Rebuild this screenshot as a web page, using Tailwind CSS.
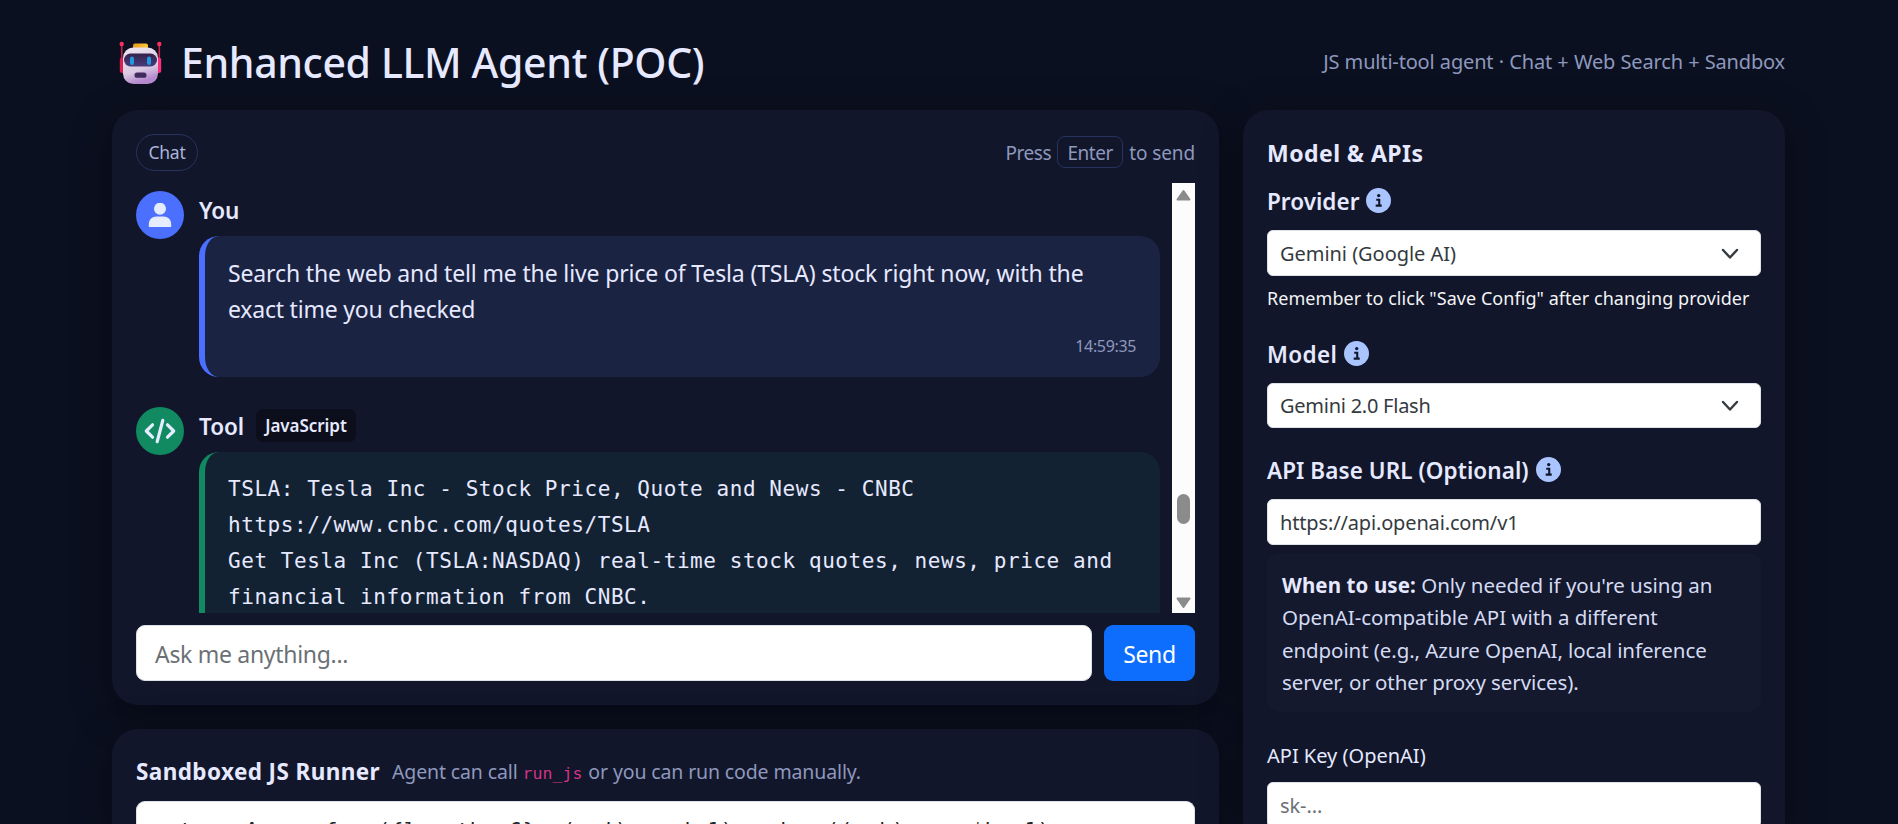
<!DOCTYPE html>
<html lang="en">
<head>
<meta charset="utf-8">
<title>Enhanced LLM Agent (POC)</title>
<script src="https://cdn.jsdelivr.net/npm/@tailwindcss/browser@4"></script>
</head>
<body class="h-[824px] overflow-hidden bg-[#0b1020] font-['Noto_Sans',sans-serif] text-[#e6e9ff]">
<div class="mx-[112px] h-[824px] w-[1673px]">
  <header class="flex h-[110px] items-center justify-between pt-[14px]">
    <h1 class="flex items-center whitespace-nowrap text-[41px] font-medium leading-[56px] tracking-[-0.36px]">
      <svg class="ml-[7px] mr-[19px] mt-[2px] h-[44px] w-[43px]" viewBox="0 0 43 44">
        <defs>
          <linearGradient id="head" x1="0" y1="0" x2="0.3" y2="1"><stop offset="0" stop-color="#efe6f1"/><stop offset="0.7" stop-color="#d9c9e2"/><stop offset="1" stop-color="#b58ad0"/></linearGradient>
          <linearGradient id="visor" x1="0" y1="0" x2="0" y2="1"><stop offset="0" stop-color="#35204a"/><stop offset="1" stop-color="#483e7c"/></linearGradient>
          <linearGradient id="cap" x1="0" y1="0" x2="1" y2="0"><stop offset="0" stop-color="#e89a1e"/><stop offset="1" stop-color="#fcca35"/></linearGradient>
        </defs>
        <path d="M2.7 3v16M40.3 3v16" stroke="#c9234f" stroke-width="1.6"/>
        <circle cx="2.7" cy="3" r="2.2" fill="#f8315f"/><circle cx="40.3" cy="3" r="2.2" fill="#f8315f"/>
        <rect x="0.8" y="16.500" width="6" height="15.500" rx="2.500" fill="#d81e50"/><rect x="36.200" y="16.500" width="6" height="15.500" rx="2.500" fill="#f8317a"/>
        <rect x="14" y="2.500" width="15" height="7" rx="2" fill="url(#cap)"/>
        <rect x="4" y="6.500" width="35" height="36.500" rx="10.500" fill="url(#head)"/>
        <rect x="5" y="12.500" width="33" height="13" rx="6.500" fill="url(#visor)"/>
        <rect x="11" y="15.500" width="4" height="8.500" rx="2" fill="#1e9be0"/><rect x="28" y="15.500" width="4" height="8.500" rx="2" fill="#1e9be0"/>
        <rect x="15.500" y="31.500" width="12" height="5.300" rx="2.600" fill="#402a5e"/>
      </svg>
      <span>Enhanced LLM Agent (POC)</span>
    </h1>
    <div class="whitespace-nowrap text-[20px] leading-[30px] tracking-[-0.17px] [word-spacing:0.3px] text-[#8e98bd]">JS multi-tool agent · Chat + Web Search + Sandbox</div>
  </header>

  <div class="flex h-[714px] gap-6">
    <main class="flex w-[1107px] flex-col gap-6">
      <section class="h-[595px] shrink-0 rounded-[26px] bg-[#11162a] p-6 shadow-[0_10px_40px_rgba(0,0,0,0.4)]">
        <div class="flex h-[37px] items-center justify-between">
          <span class="flex h-[37px] w-[62px] items-center justify-center rounded-full border border-[#26335f] text-[17.5px] tracking-[-0.25px] text-[#a9b4d9]">Chat</span>
          <span class="flex items-center text-[19px] tracking-[-0.45px] text-[#8e98bd]"><span class="pt-0.5">Press</span><kbd class="mx-[6px] mb-px flex h-[32px] w-[66px] items-center justify-center rounded-[8px] border border-[#26335f] pt-0.5 font-['Noto_Sans',sans-serif]">Enter</kbd><span class="pt-0.5 tracking-[-0.1px]">to send</span></span>
        </div>

        <div class="mt-3 flex h-[430px] gap-3 overflow-hidden">
          <div class="flex w-[1024px] flex-col gap-[30px] pt-2">
            <div class="flex gap-[15px]">
              <div class="flex h-12 w-12 shrink-0 items-center justify-center rounded-full bg-[#4b6fff]">
                <svg class="h-6 w-6" viewBox="0 0 24 24" fill="#e6ecff"><circle cx="12" cy="5.700" r="6"/><path d="M.8 24v-2.500c0-5 3.500-7.900 7.700-7.900h7c4.200 0 7.700 2.900 7.700 7.900V24z"/></svg>
              </div>
              <div class="w-[961px]">
                <div class="text-[22.5px] font-semibold leading-[39px] tracking-[-0.2px]">You</div>
                <div class="mt-[6px] h-[141px] rounded-[20px] border-l-[6px] border-[#4b6fff] bg-[#1b2342] pl-[23px] pr-6 pt-[19px]">
                  <p class="whitespace-nowrap text-[23px] leading-[36px] tracking-[-0.14px]">Search the web and tell me the live price of Tesla (TSLA) stock right now, with the<br><span class="tracking-[-0.22px]">exact time you checked</span></p>
                  <div class="mt-[7px] text-right text-[16px] leading-[25px] tracking-[-0.35px] text-[#8e98bd]">14:59:35</div>
                </div>
              </div>
            </div>
            <div class="flex gap-[15px]">
              <div class="flex h-12 w-12 shrink-0 items-center justify-center rounded-full bg-[#118a62]">
                <svg class="h-[26px] w-[32px]" viewBox="0 0 32 26" fill="none" stroke="#e6ecff" stroke-width="3.200" stroke-linecap="round" stroke-linejoin="round"><path d="M8.500 6.800 2.300 13l6.200 6.200M23.500 6.800l6.200 6.200-6.200 6.200M18.800 2.300 13.200 23.700"/></svg>
              </div>
              <div class="w-[961px]">
                <div class="flex h-[39px] items-center text-[22.5px] font-semibold leading-[39px]"><span class="tracking-[-0.1px]">Tool</span><span class="ml-[12px] mb-[3px] flex h-[33px] w-[100px] items-center justify-center rounded-[7px] bg-[#0c0e1b] pt-px text-[17px] tracking-[-0.05px]">JavaScript</span></div>
                <div class="mt-[6px] h-[220px] rounded-[20px] border-l-[6px] border-[#118a62] bg-[#132233] pl-[23px] pt-[19px]">
                  <pre class="font-['DejaVu_Sans_Mono',monospace] text-[21px] leading-[36px] tracking-[0.56px]">TSLA: Tesla Inc - Stock Price, Quote and News - CNBC
https://www.cnbc.com/quotes/TSLA
Get Tesla Inc (TSLA:NASDAQ) real-time stock quotes, news, price and
financial information from CNBC.</pre>
                </div>
              </div>
            </div>
          </div>
          <div class="flex h-[430px] w-[23px] flex-col items-center bg-[#fcfcfc]">
            <svg class="mt-[6px] h-[12px] w-[15px] shrink-0" viewBox="0 0 15 12" fill="#8b8b8b" stroke="#8b8b8b" stroke-width="2" stroke-linejoin="round"><path d="M7.500 2 13.500 10.500h-12z"/></svg>
            <div class="mt-[293px] h-[30px] w-[13px] shrink-0 rounded-full bg-[#8b8b8b]"></div>
            <svg class="mt-[72px] h-[12px] w-[15px] shrink-0" viewBox="0 0 15 12" fill="#8b8b8b" stroke="#8b8b8b" stroke-width="2" stroke-linejoin="round"><path d="M7.500 11 13.500 2.500h-12z"/></svg>
          </div>
        </div>

        <div class="mt-3 flex gap-3">
          <div class="flex h-14 w-[956px] items-center rounded-[9px] border border-[#dee2e6] bg-white pl-[18px] pt-0.5 text-[23px] tracking-[-0.3px] text-[#6b7075]">Ask me anything...</div>
          <button class="flex h-14 w-[91px] items-center justify-center rounded-[9px] bg-[#0d6efd] pt-0.5 text-[23px] tracking-[-0.4px] text-white">Send</button>
        </div>
      </section>

      <section class="flex min-h-0 flex-1 flex-col rounded-t-[26px] bg-[#11162a] px-6 pt-6 shadow-[0_10px_40px_rgba(0,0,0,0.4)]">
        <div class="flex h-[36px] shrink-0 items-center whitespace-nowrap pt-0.5">
          <span class="w-[256px] text-[22.5px] font-bold tracking-[0.4px]">Sandboxed JS Runner</span>
          <span class="text-[19.5px] tracking-[-0.13px] text-[#8e98bd]">Agent can call <code class="mr-px font-['DejaVu_Sans_Mono',monospace] text-[16.5px] tracking-[0.05px] text-[#d63384]">run_js</code> or you can run code manually.</span>
        </div>
        <div class="mt-3 min-h-0 flex-1 overflow-hidden rounded-t-[9px] border border-b-0 border-[#dee2e6] bg-white pl-4 pt-[11px]">
          <pre class="font-['DejaVu_Sans_Mono',monospace] text-[21px] leading-[36px] tracking-[0.56px] text-[#212529]">return Array.from({length: 6}, (_,i) =&gt; i+1).reduce((a,b) =&gt; a*b, 1)</pre>
        </div>
      </section>
    </main>

    <aside class="h-[714px] w-[542px] overflow-hidden rounded-t-[26px] bg-[#11162a] px-6 pt-6 shadow-[0_10px_40px_rgba(0,0,0,0.4)]">
      <h2 class="text-[23px] font-bold leading-[38px] tracking-[0.45px]">Model &amp; APIs</h2>

      <div class="mt-[12px] flex h-[36px] items-center text-[22.5px] font-semibold tracking-[0.02px]">Provider
        <svg class="mb-[3px] ml-[7px] h-[25px] w-[25px]" viewBox="0 0 24 24"><circle cx="12" cy="12" r="12" fill="#a9c4ff"/><circle cx="12.200" cy="7.300" r="1.600" fill="#11162a"/><path d="M9.800 11.300h2.900v5.200M9.300 16.900h5.800" fill="none" stroke="#11162a" stroke-width="2"/></svg>
      </div>
      <div class="mt-[10px] flex h-[46px] items-center justify-between rounded-[6px] border border-[#dee2e6] bg-white pl-[12px] pr-[20px] pt-px text-[20px] tracking-[-0.04px] text-[#343a40]">Gemini (Google AI)
        <svg class="h-[18px] w-[20px]" viewBox="0 0 20 18" fill="none" stroke="#343a40" stroke-width="2.400" stroke-linecap="round" stroke-linejoin="round"><path d="m3 5 7 7.500L17 5"/></svg>
      </div>
      <p class="mt-[6px] whitespace-nowrap text-[18px] leading-[32px] tracking-[0.05px] text-[#f3f4f6]">Remember to click "Save Config" after changing provider</p>

      <div class="mt-[23px] flex h-[36px] items-center text-[22.5px] font-semibold tracking-[0.35px]">Model
        <svg class="mb-[3px] ml-[7px] h-[25px] w-[25px]" viewBox="0 0 24 24"><circle cx="12" cy="12" r="12" fill="#a9c4ff"/><circle cx="12.200" cy="7.300" r="1.600" fill="#11162a"/><path d="M9.800 11.300h2.900v5.200M9.300 16.900h5.800" fill="none" stroke="#11162a" stroke-width="2"/></svg>
      </div>
      <div class="mt-[10px] flex h-[45px] items-center justify-between rounded-[6px] border border-[#dee2e6] bg-white pl-[12px] pr-[20px] pt-px text-[20px] tracking-[-0.25px] text-[#343a40]">Gemini 2.0 Flash
        <svg class="h-[18px] w-[20px]" viewBox="0 0 20 18" fill="none" stroke="#343a40" stroke-width="2.400" stroke-linecap="round" stroke-linejoin="round"><path d="m3 5 7 7.500L17 5"/></svg>
      </div>

      <div class="mt-[25px] flex h-[36px] items-center text-[22.5px] font-semibold tracking-[0.06px]">API Base URL (Optional)
        <svg class="mb-[3px] ml-[7px] h-[25px] w-[25px]" viewBox="0 0 24 24"><circle cx="12" cy="12" r="12" fill="#a9c4ff"/><circle cx="12.200" cy="7.300" r="1.600" fill="#11162a"/><path d="M9.800 11.300h2.900v5.200M9.300 16.900h5.800" fill="none" stroke="#11162a" stroke-width="2"/></svg>
      </div>
      <div class="mt-[10px] flex h-[46px] items-center rounded-[6px] border border-[#dee2e6] bg-white pl-[12px] pt-px text-[20px] tracking-[-0.15px] text-[#343a40]">https://api.openai.com/v1</div>
      <div class="mt-2 h-[159px] whitespace-nowrap rounded-[12px] bg-[#14192d] pl-[15px] pt-[16px] text-[20.5px] leading-[32.3px] tracking-[-0.04px] text-[#d5dbf3]"><strong class="font-bold tracking-[0.1px] text-[#e6e9ff]">When to use:</strong> Only needed if you're using an<br>OpenAI-compatible API with a different<br><span class="tracking-[-0.09px]">endpoint (e.g., Azure OpenAI, local inference</span><br><span class="tracking-[-0.09px]">server, or other proxy services).</span></div>

      <div class="mt-[26px] text-[20px] leading-[36px]">API Key (OpenAI)</div>
      <div class="mt-[8px] flex h-[46px] items-center rounded-[6px] border border-[#dee2e6] bg-white pl-[12px] pt-0.5 text-[20px] tracking-[-0.1px] text-[#6b7075]">sk-...</div>
    </aside>
  </div>
</div>
</body>
</html>
